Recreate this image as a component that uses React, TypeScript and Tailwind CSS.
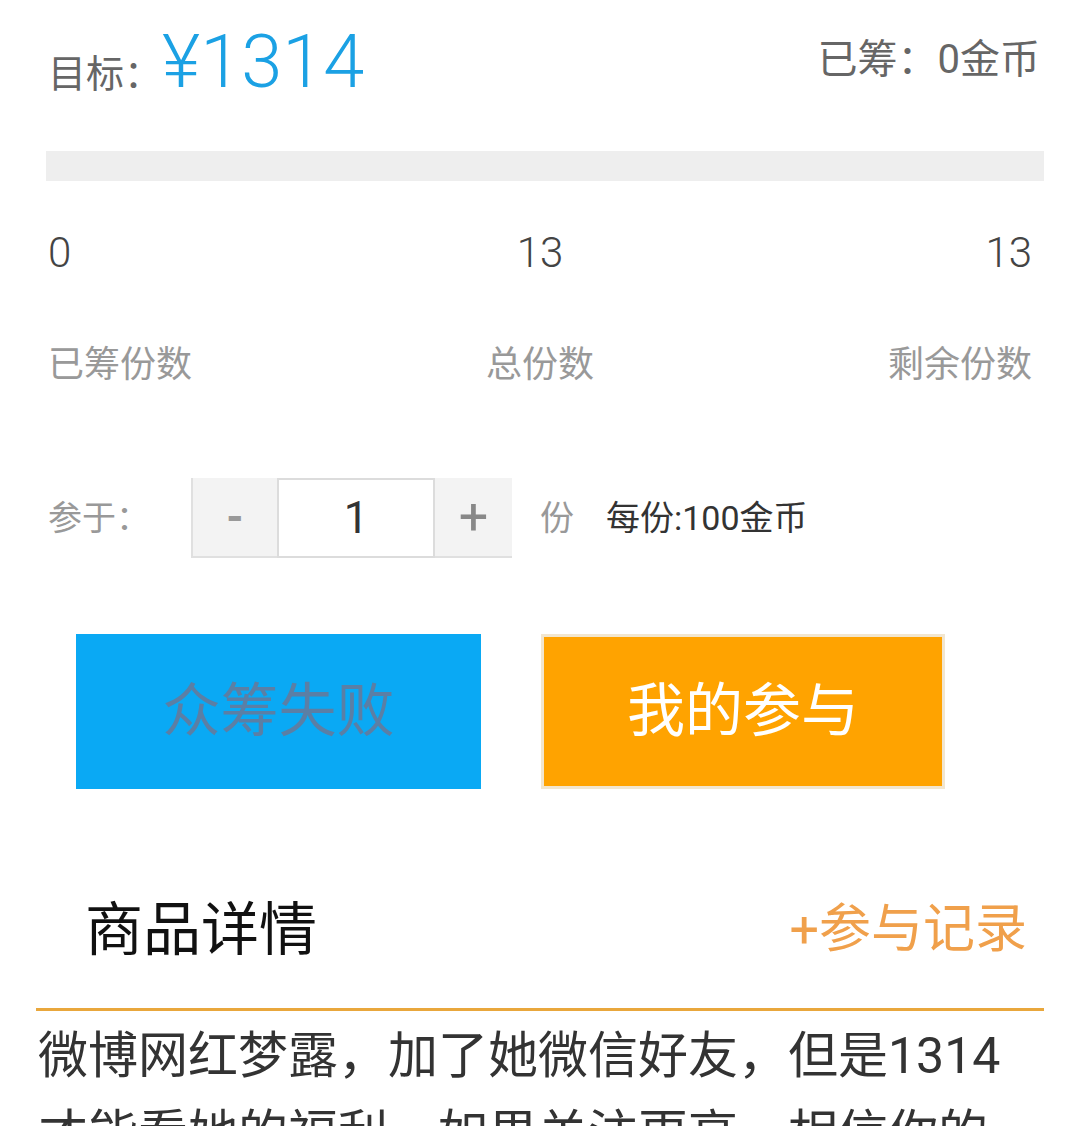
import React from "react";

const stats = [
  { value: "0", label: "已筹份数", align: "text-left" },
  { value: "13", label: "总份数", align: "text-center" },
  { value: "13", label: "剩余份数", align: "text-right" },
];

export default function App() {
  return (
    <div className="w-[1075px] h-[1126px] overflow-hidden bg-white font-['Roboto','Noto_Sans_CJK_SC',sans-serif]">
      {/* target + raised */}
      <div className="flex items-start justify-between pl-[48px] pr-[35px] pt-[25px]">
        <div className="flex items-baseline">
          <span className="text-[38px] leading-none text-[#666]">目标：</span>
          <span className="text-[74px] font-light leading-none text-[#1ba1e4]">¥1314</span>
        </div>
        <div className="mt-[15px] text-[40px] leading-none text-[#666]">已筹：0金币</div>
      </div>

      {/* progress */}
      <div className="ml-[46px] mt-[52px] h-[30px] w-[998px] bg-[#eeeeee]" />

      {/* stats */}
      <div className="mt-[51px] grid grid-cols-3 pl-[48px] pr-[43px]">
        {stats.map((s) => (
          <div key={s.label} className={s.align}>
            <div className="text-[42px] font-light leading-none text-[#444]">{s.value}</div>
            <div className="mt-[73px] text-[36px] leading-none text-[#999]">{s.label}</div>
          </div>
        ))}
      </div>

      {/* quantity row */}
      <div className="mt-[95px] flex items-center pl-[48px]">
        <span className="w-[143px] text-[34px] leading-none text-[#999]">参于：</span>
        <div className="flex h-[80px]">
          <button className="flex w-[86px] items-center justify-center border-b-2 border-l-2 border-[#e0e0e0] bg-[#f3f3f3] text-[44px] font-bold leading-none text-[#999]">
            -
          </button>
          <div className="flex w-[158px] items-center justify-center border-2 border-[#dcdcdc] bg-white text-[44px] leading-none text-[#333]">
            1
          </div>
          <button className="flex w-[77px] items-center justify-center border-b-2 border-[#e0e0e0] bg-[#f3f3f3] text-[52px] leading-none text-[#888]">
            +
          </button>
        </div>
        <span className="ml-[28px] text-[34px] leading-none text-[#999]">份</span>
        <span className="ml-[32px] text-[34px] leading-none text-[#333]">每份:100金币</span>
      </div>

      {/* action buttons */}
      <div className="mt-[76px] flex gap-[60px] pl-[76px]">
        <button className="flex h-[155px] w-[405px] items-center justify-center bg-[#0aa9f4] text-[58px] text-[#5b7fa5]">
          众筹失败
        </button>
        <button className="flex h-[155px] w-[404px] items-center justify-center border-[3px] border-[#f2e6cf] bg-[#ffa300] text-[58px] text-white">
          我的参与
        </button>
      </div>

      {/* details header */}
      <div className="mt-[112px] flex items-center justify-between pl-[85px] pr-[48px]">
        <span className="text-[58px] leading-none text-[#111]">商品详情</span>
        <span className="text-[52px] leading-none text-[#f0a04b]">+参与记录</span>
      </div>
      <div className="ml-[36px] mt-[49px] h-[3px] w-[1008px] bg-[#e9a73c]" />

      <p className="mt-[6px] pl-[38px] pr-[40px] text-[50px] leading-[78px] text-[#333]">
        微博网红梦露，加了她微信好友，但是1314才能看她的福利，如果关注更高，相信你的的
      </p>
    </div>
  );
}
